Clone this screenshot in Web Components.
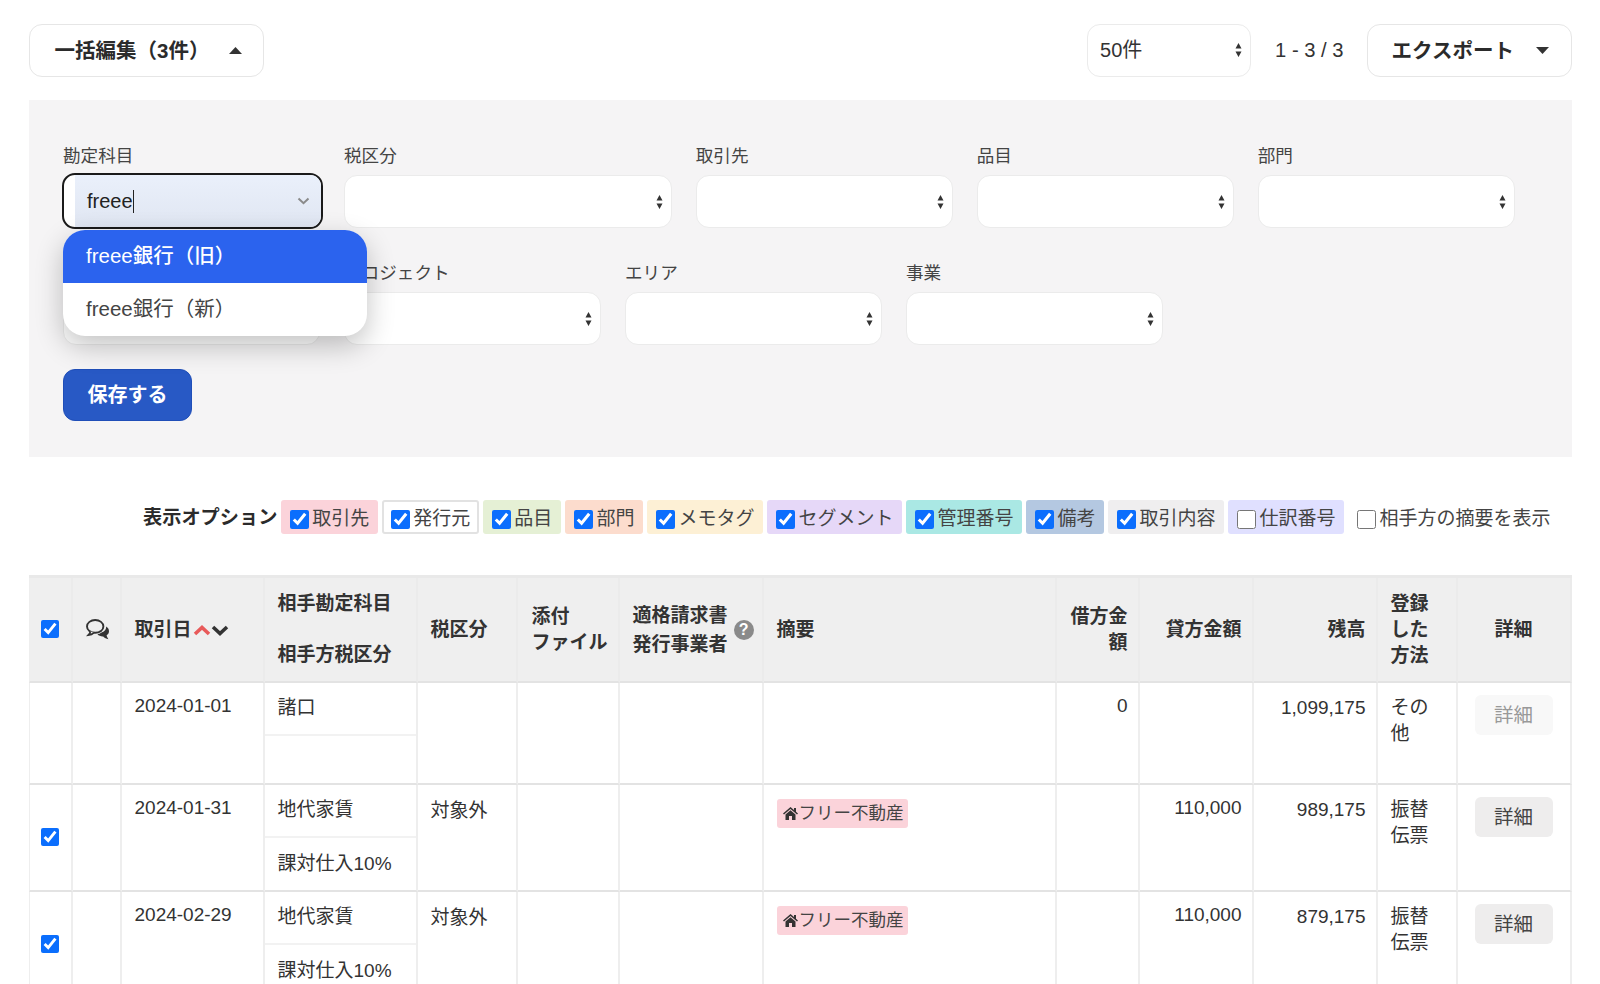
<!DOCTYPE html>
<html lang="ja">
<head>
<meta charset="utf-8">
<title>一括編集</title>
<style>
  html, body { margin: 0; height: 100%; overflow: hidden; background: #fff; }
  body { font-family: "Liberation Sans", "Noto Sans CJK JP", sans-serif; font-size: 19px; color: #333; }
</style>
</head>
<body>
<bulk-page></bulk-page>

<script>
// Toolbar button with a small triangle on the right
class CaretButton extends HTMLElement {
    constructor() {
        super();
        this.attachShadow({ mode: 'open' });
    }
    connectedCallback() {
        const up = this.getAttribute('dir') === 'up';
        this.shadowRoot.innerHTML = `
            <style>
                :host { display: flex; align-items: center; justify-content: space-between; box-sizing: border-box; height: 53px; background: #fff; border: 1.5px solid #e6e6e6; border-radius: 13px; font-size: 20.5px; font-weight: 700; color: #2b2b2b; }
                span { margin-bottom: 3px; white-space: nowrap; }
                svg { display: block; }
            </style>
            <span><slot></slot></span>
            <svg width="13" height="7" viewBox="0 0 13 7"><path d="${up ? 'M6.5 0L13 7H0Z' : 'M0 0H13L6.5 7Z'}" fill="#333"/></svg>
        `;
        this.style.padding = this.getAttribute('pad');
        this.style.width = this.getAttribute('w') + 'px';
    }
}
customElements.define('caret-button', CaretButton);

// Closed select box with the up and down arrows of a native select
class ArrowSelect extends HTMLElement {
    constructor() {
        super();
        this.attachShadow({ mode: 'open' });
    }
    connectedCallback() {
        this.shadowRoot.innerHTML = `
            <style>
                :host { display: flex; align-items: center; justify-content: space-between; box-sizing: border-box; height: 53px; width: 257.25px; padding: 0 8.5px 0 12px; background: #fff; border: 1.5px solid #ebebeb; border-radius: 13px; font-size: 20px; color: #333; }
                span { margin-bottom: 3px; }
                svg { display: block; flex: none; }
            </style>
            <span><slot></slot></span>
            <svg width="7" height="14" viewBox="0 0 7 14"><path d="M3.5 0L6.5 5.5H.5Z M.5 8.5H6.5L3.5 14Z" fill="#333"/></svg>
        `;
    }
}
customElements.define('arrow-select', ArrowSelect);

// Label with a control below it
class FormField extends HTMLElement {
    constructor() {
        super();
        this.attachShadow({ mode: 'open' });
    }
    connectedCallback() {
        this.shadowRoot.innerHTML = `
            <style>
                :host { display: block; }
                label { display: block; box-sizing: border-box; height: 24px; padding-top: 1px; line-height: 24px; margin-bottom: 8px; font-size: 17.6px; color: #444; white-space: nowrap; }
            </style>
            <label>${this.getAttribute('label') || '&nbsp;'}</label>
            <slot></slot>
        `;
    }
}
customElements.define('form-field', FormField);

// Focused combobox with its open list over the form
class ComboBox extends HTMLElement {
    constructor() {
        super();
        this.attachShadow({ mode: 'open' });
    }
    connectedCallback() {
        this.shadowRoot.innerHTML = `
            <style>
                :host { display: flow-root; position: relative; z-index: 5; width: 257.25px; height: 53px; }
                .box { box-sizing: border-box; display: flex; margin: -2px -2.5px 0 -1px; height: 56px; padding-left: 11px; background: #fff; border: 2px solid #1a1a1a; border-radius: 13px; overflow: hidden; }
                .input { flex: 1; display: flex; align-items: center; padding: 0 11px 0 12px; background: linear-gradient(#eaf0fb, #e0e6f2); font-size: 20px; color: #222; }
                .caret { width: 1px; height: 23px; background: #222; }
                svg { margin-left: auto; display: block; }
                ul { position: absolute; left: 0; top: 54.5px; width: 304px; margin: 0; padding: 0; list-style: none; background: #fff; border-radius: 22px; overflow: hidden; box-shadow: 0 10px 28px rgba(0,0,0,.24); font-size: 20.5px; }
                li { height: 53px; line-height: 51px; padding-left: 23px; color: #444; white-space: nowrap; }
                li.on { background: #2b63ee; color: #fff; font-weight: 500; }
            </style>
            <div class="box">
                <div class="input">freee<span class="caret"></span>
                    <svg width="13" height="8" viewBox="0 0 13 8"><path d="M1.5 1.5L6.5 6.2L11.5 1.5" fill="none" stroke="#8a8a8a" stroke-width="2"/></svg>
                </div>
            </div>
            <ul>
                <li class="on">freee銀行（旧）</li>
                <li>freee銀行（新）</li>
            </ul>
        `;
    }
}
customElements.define('combo-box', ComboBox);

// Checkbox chip of the display options row
class OptionChip extends HTMLElement {
    constructor() {
        super();
        this.attachShadow({ mode: 'open' });
    }
    connectedCallback() {
        const bg = this.getAttribute('bg');
        this.shadowRoot.innerHTML = `
            <style>
                :host { display: flex; align-items: center; box-sizing: border-box; height: 34px; padding: 0 9px; gap: 3px; border-radius: 3px; white-space: nowrap; background: ${bg || 'transparent'}; color: #444; }
                :host([outlined]) { border: 2px solid #e2e2e2; padding: 0 7px; }
                input { width: 19px; height: 19px; margin: 5px 0 0; accent-color: #0b6efd; flex: none; }
            </style>
            <input type="checkbox" ${this.hasAttribute('checked') ? 'checked' : ''}>
            <span><slot></slot></span>
        `;
    }
}
customElements.define('option-chip', OptionChip);

// The table of journal lines
class TxnTable extends HTMLElement {
    constructor() {
        super();
        this.attachShadow({ mode: 'open' });
    }

    set rows(value) {
        this._rows = value;
        this.render();
    }

    renderRow(r) {
        const tag = r.tag ? `<span class="tag"><svg width="15" height="13" viewBox="0 0 15 13"><path d="M7.5 0L11 3V1H13V4.7L15 6.5L14 7.6L7.5 1.9L1 7.6L0 6.5Z M2.5 7.6L7.5 3.3L12.5 7.6V13H9V9H6V13H2.5Z" fill="#333"/></svg>${r.tag}</span>` : '';
        return `
            <tr style="height:${r.h}px">
                <td class="mid">${r.check ? '<input type="checkbox" checked>' : ''}</td>
                <td></td>
                <td class="p10">${r.date}</td>
                <td class="split">
                    <div class="a">${r.account}</div>
                    <div class="b">${r.taxTo}</div>
                </td>
                <td class="p13">${r.tax}</td>
                <td></td>
                <td></td>
                <td class="tagcell">${tag}</td>
                <td class="p10 num">${r.debit}</td>
                <td class="p10 num">${r.credit}</td>
                <td class="p12 num">${r.balance}</td>
                <td class="p12">${r.method}</td>
                <td class="btncell"><span class="detail ${r.off ? 'off' : ''}">詳細</span></td>
            </tr>
        `;
    }

    render() {
        const widths = [44, 49, 143, 153, 100, 102, 144, 293, 83, 114, 124, 80, 114];
        this.shadowRoot.innerHTML = `
            <style>
                :host { display: block; width: 1543px; border-top: 3.5px solid #e9e9e9; color: #333; }
                table { table-layout: fixed; width: 1543px; border-collapse: separate; border-spacing: 0; line-height: 26px; }
                th, td { box-sizing: border-box; padding: 0 13px; border-right: 2px solid #eeeeee; border-bottom: 2px solid #e3e3e3; text-align: left; vertical-align: top; font-weight: 400; }
                tr > :first-child { border-left: 1.5px solid #eeeeee; }
                th { height: 105px; padding-top: 2px; background: #efefef; vertical-align: middle; font-weight: 700; border-right-color: #ebebeb; }
                th.two { padding-top: 0; line-height: 51.5px; white-space: nowrap; }
                th.file { white-space: nowrap; padding-left: 14px; padding-right: 0; }
                th.inv { padding-right: 8px; line-height: 29px; }
                th.r, .num { text-align: right; padding-right: 10px; }
                th.c { text-align: center; }
                .flex { display: flex; align-items: center; white-space: nowrap; }
                .help { flex: none; width: 20px; height: 20px; margin-left: 6px; border-radius: 50%; background: #8a8a8a; color: #fff; font-size: 16px; font-weight: 700; line-height: 20px; text-align: center; }
                input { display: block; width: 18px; height: 18px; margin: 0 auto; accent-color: #0b6efd; }
                th:first-child, td:first-child { padding: 0; }
                td.mid { vertical-align: middle; }
                th.icon { padding: 0 0 0 13px; }
                td.p10 { padding-top: 10px; }
                td.p12 { padding-top: 12px; }
                td.p13 { padding-top: 13px; }
                td.split { padding: 0; }
                .a { height: 53px; box-sizing: border-box; padding: 12px 13px 0; border-bottom: 2px solid #f2f2f2; }
                .b { padding: 13.5px 13px 0; }
                td.tagcell { padding-top: 14px; }
                .tag { display: inline-flex; align-items: center; height: 29px; padding: 0 4px 0 6px; gap: 1px; background: #fbd3da; border-radius: 3px; font-size: 17.5px; line-height: 27px; color: #444; white-space: nowrap; }
                td.btncell { padding: 12px 0 0 17px; }
                .detail { display: block; width: 78px; height: 40px; line-height: 40px; background: #eeeded; border-radius: 6px; font-size: 19.5px; text-align: center; color: #444; }
                .detail.off { background: #f8f8f8; color: #999; }
                .sort { margin-left: 1px; display: block; }
            </style>
            <table>
                <colgroup>${widths.map(w => `<col style="width:${w}px">`).join('')}</colgroup>
                <thead>
                    <tr>
                        <th><input type="checkbox" checked></th>
                        <th class="icon">
                            <svg width="23" height="21" viewBox="0 0 23 21" style="display:block">
                                <path d="M15.6 13.4C19 12.6 20.4 10 20.2 7.6C22 8.8 23 10.4 23 12.2C23 14 22 15.4 20.6 16.2C20.8 17.6 21.6 19 22.4 20.2C20.4 19.8 18.4 18.6 17.2 17.4C15 17.6 12.8 16.6 11.4 15.2C12.8 15 14.4 14.2 15.6 13.4Z" fill="#333"/>
                                <ellipse cx="9.2" cy="7.4" rx="8.2" ry="6.4" fill="none" stroke="#333" stroke-width="1.9"/>
                                <path d="M4.4 12.3C4.2 13.8 3.2 15.2 2.2 16.2C4.6 16 6.6 15.2 8 13.7" fill="#efefef" stroke="#333" stroke-width="1.7"/>
                            </svg>
                        </th>
                        <th>
                            <div class="flex">取引日
                                <svg class="sort" width="36" height="12" viewBox="0 0 36 12">
                                    <path d="M2 10L9 3.5L16 10" fill="none" stroke="#e85a5a" stroke-width="3.6"/>
                                    <path d="M20 3L27 9.5L34 3" fill="none" stroke="#333" stroke-width="3.6"/>
                                </svg>
                            </div>
                        </th>
                        <th class="two">相手勘定科目<br>相手方税区分</th>
                        <th>税区分</th>
                        <th class="file">添付<br>ファイル</th>
                        <th class="inv"><div class="flex"><span>適格請求書<br>発行事業者</span><span class="help">?</span></div></th>
                        <th>摘要</th>
                        <th class="r">借方金<br>額</th>
                        <th class="r">貸方金額</th>
                        <th class="r">残高</th>
                        <th>登録した方法</th>
                        <th class="c">詳細</th>
                    </tr>
                </thead>
                <tbody>
                    ${this._rows.map(r => this.renderRow(r)).join('')}
                </tbody>
            </table>
        `;
    }
}
customElements.define('txn-table', TxnTable);

// Page body: toolbar, bulk edit form, display options and the table
class BulkPage extends HTMLElement {
    constructor() {
        super();
        this.attachShadow({ mode: 'open' });
    }
    connectedCallback() {
        const chips = [
            ['取引先', '#fbd3da', 1], ['発行元', '#fff', 1, 'outlined'], ['品目', '#e5f0d5', 1], ['部門', '#fcdccd', 1],
            ['メモタグ', '#fdf0d5', 1], ['セグメント', '#e6d8f8', 1], ['管理番号', '#aae8e4', 1], ['備考', '#b4c8e1', 1],
            ['取引内容', '#efeeef', 1], ['仕訳番号', '#e0e0ff', 0]
        ];
        this.shadowRoot.innerHTML = `
            <style>
                :host { display: block; padding: 23.5px 0 0 28.5px; width: 1543px; }
                .top { display: flex; align-items: center; }
                .pager { margin: 0 23px 0 24px; font-size: 20.2px; white-space: nowrap; }
                .panel { margin-top: 23px; box-sizing: border-box; height: 357px; padding: 43.5px 0 0 34.5px; background: #f5f4f5; }
                .row { display: flex; gap: 23.75px; margin-bottom: 32px; }
                .row + .row { margin-bottom: 24px; }
                .save { display: block; box-sizing: border-box; width: 129px; height: 52px; line-height: 50px; background: #2859c5; border: 1.5px solid #1f4eb8; border-radius: 12px; color: #fff; font-size: 20px; font-weight: 700; text-align: center; }
                .options { display: flex; align-items: center; justify-content: flex-end; gap: 4px; margin-top: 43px; padding-right: 21px; white-space: nowrap; }
                .options b { margin-bottom: 2px; color: #2b2b2b; font-size: 19.2px; }
                txn-table { margin-top: 41px; }
            </style>
            <div class="top">
                <caret-button dir="up" w="235" pad="0 21px 0 25px">一括編集（3件）</caret-button>
                <arrow-select style="width:164px;margin-left:auto">50件</arrow-select>
                <span class="pager">1 - 3 / 3</span>
                <caret-button dir="down" w="205" pad="0 22px 0 24px">エクスポート</caret-button>
            </div>
            <div class="panel">
                <div class="row">
                    <form-field label="勘定科目"><combo-box></combo-box></form-field>
                    <form-field label="税区分"><arrow-select style="width:328px"></arrow-select></form-field>
                    <form-field label="取引先"><arrow-select></arrow-select></form-field>
                    <form-field label="品目"><arrow-select></arrow-select></form-field>
                    <form-field label="部門"><arrow-select></arrow-select></form-field>
                </div>
                <div class="row">
                    <form-field><arrow-select></arrow-select></form-field>
                    <form-field label="プロジェクト"><arrow-select></arrow-select></form-field>
                    <form-field label="エリア"><arrow-select></arrow-select></form-field>
                    <form-field label="事業"><arrow-select></arrow-select></form-field>
                </div>
                <span class="save">保存する</span>
            </div>
            <div class="options">
                <b>表示オプション</b>
                ${chips.map(c => `<option-chip bg="${c[1]}" ${c[2] ? 'checked' : ''} ${c[3] || ''}>${c[0]}</option-chip>`).join('')}
                <option-chip style="margin-left:9px;padding:0">相手方の摘要を表示</option-chip>
            </div>
            <txn-table></txn-table>
        `;
        this.shadowRoot.querySelector('txn-table').rows = [
            { h: 102, off: true, date: '2024-01-01', account: '諸口', taxTo: '', tax: '', tag: '', debit: '0', credit: '', balance: '1,099,175', method: 'その他' },
            { h: 107, check: true, date: '2024-01-31', account: '地代家賃', taxTo: '課対仕入10%', tax: '対象外', tag: 'フリー不動産', debit: '', credit: '110,000', balance: '989,175', method: '振替伝票' },
            { h: 107, check: true, date: '2024-02-29', account: '地代家賃', taxTo: '課対仕入10%', tax: '対象外', tag: 'フリー不動産', debit: '', credit: '110,000', balance: '879,175', method: '振替伝票' }
        ];
    }
}
customElements.define('bulk-page', BulkPage);
</script>
</body>
</html>
